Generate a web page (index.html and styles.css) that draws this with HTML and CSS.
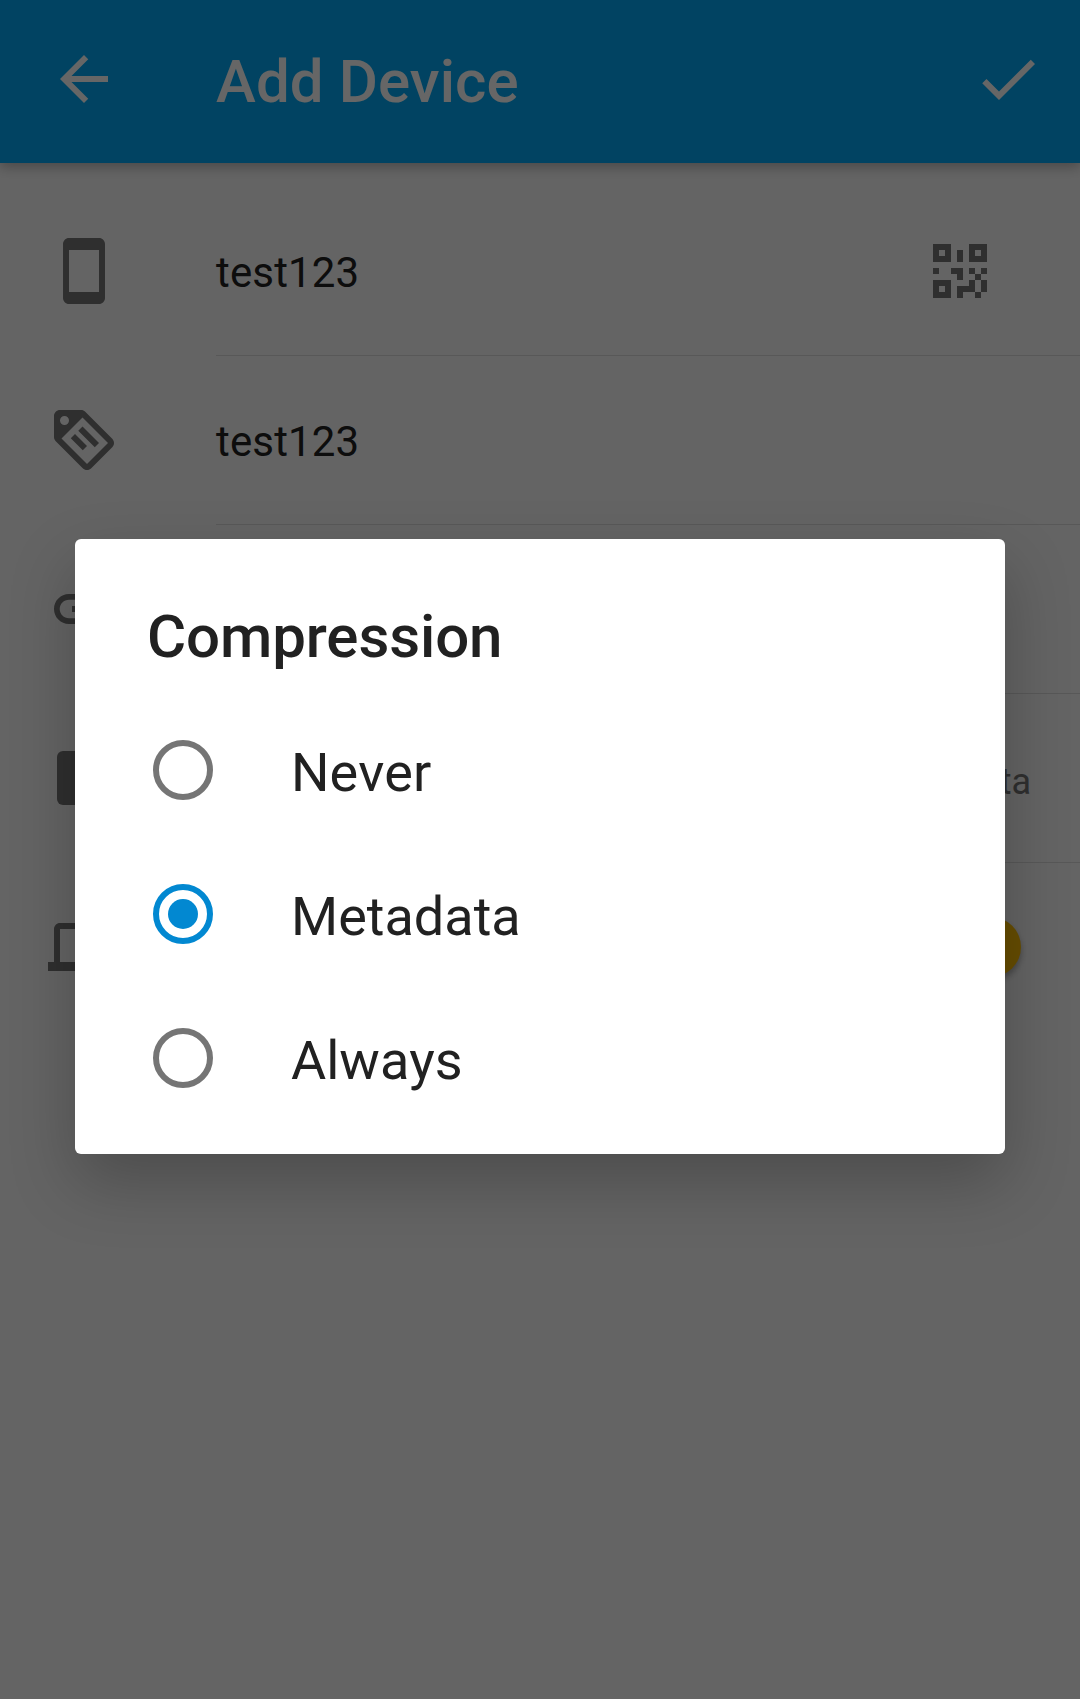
FILE: index.html
```html
<!DOCTYPE html>
<html lang="en">
<head>
<meta charset="utf-8">
<title>Add Device</title>
<link rel="stylesheet" href="styles.css">
</head>
<body>
<div class="screen">
  <header class="toolbar">
    <svg class="icon" viewBox="0 0 24 24"><path d="M20 11H7.83l5.59-5.59L12 4l-8 8 8 8 1.41-1.41L7.83 13H20v-2z"/></svg>
    <h1 class="toolbar-title">Add Device</h1>
    <svg class="icon" viewBox="0 0 24 24"><path d="M9 16.17L4.83 12l-1.42 1.41L9 19 21 7l-1.41-1.41z"/></svg>
  </header>
  <main class="form">
    <div class="row">
      <svg class="icon" viewBox="0 0 24 24"><path d="M17 1.01L7 1c-1.1 0-1.99.9-1.99 2v18c0 1.1.89 2 1.99 2h10c1.1 0 2-.9 2-2V3c0-1.1-.9-1.99-2-1.99zM17 19H7V5h10v14z"/></svg>
      <div class="field"><span class="value">test123</span>
        <svg class="icon qr" viewBox="0 0 24 24" shape-rendering="crispEdges"><path fill-rule="evenodd" d="M3 3h6v6H3zM5 5v2h2V5zM15 3h6v6h-6zM17 5v2h2V5zM3 15h6v6H3zM5 17v2h2v-2zM11 5h2v4h-2zM3 11h2v2H3zM9 11h4v4h-2v-2H9zM15 11h2v2h-2zM19 11h2v2h-2zM17 13h2v2h-2zM15 15h2v4h-4v2h-2v-4h4zM19 15h2v4h-2zM17 19h2v2h-2z"/></svg>
      </div>
    </div>
    <div class="row">
      <svg class="icon" viewBox="0 0 24 24"><path fill-rule="evenodd" d="M5.5 7A1.5 1.5 0 0 0 7 5.5A1.5 1.5 0 0 0 5.5 4A1.5 1.5 0 0 0 4 5.5A1.5 1.5 0 0 0 5.5 7M21.41 11.58C21.77 11.94 22 12.44 22 13C22 13.55 21.78 14.05 21.41 14.41L14.41 21.41C14.05 21.77 13.55 22 13 22C12.45 22 11.95 21.77 11.58 21.41L2.59 12.41C2.22 12.05 2 11.55 2 11V4C2 2.89 2.89 2 4 2H11C11.55 2 12.05 2.22 12.41 2.58L21.41 11.58M13 20L20 13L11.5 4.5L4.5 11.5L13 20M10.09 8.91L11.5 7.5L17 13L15.59 14.41L10.09 8.91M7.59 11.41L9 10L13 14L11.59 15.41L7.59 11.41Z"/></svg>
      <div class="field"><span class="value">test123</span></div>
    </div>
    <div class="row">
      <svg class="icon" viewBox="0 0 24 24"><path d="M3.9 12c0-1.71 1.39-3.1 3.1-3.1h4V7H7c-2.76 0-5 2.24-5 5s2.24 5 5 5h4v-1.9H7c-1.71 0-3.1-1.39-3.1-3.1zM8 13h8v-2H8v2zm9-6h-4v1.9h4c1.71 0 3.1 1.39 3.1 3.1s-1.39 3.1-3.1 3.1h-4V17h4c2.76 0 5-2.24 5-5s-2.24-5-5-5z"/></svg>
      <div class="field"></div>
    </div>
    <div class="row">
      <svg class="icon" viewBox="0 0 24 24"><rect x="3" y="3" width="18" height="18" rx="2"/></svg>
      <div class="field"><span class="hint">Metadata</span></div>
    </div>
    <div class="row">
      <svg class="icon" viewBox="0 0 24 24"><path d="M4 6h18V4H4c-1.1 0-2 .9-2 2v11H0v3h14v-3H4V6zm19 2h-6c-.55 0-1 .45-1 1v10c0 .55.45 1 1 1h6c.55 0 1-.45 1-1V9c0-.55-.45-1-1-1zm-1 9h-4v-7h4v7z"/></svg>
      <div class="field last"><span class="switch"><span class="thumb"></span></span></div>
    </div>
  </main>
  <div class="scrim">
    <section class="dialog" role="dialog">
      <h2 class="dialog-title">Compression</h2>
      <div class="option"><span class="radio"></span><span class="option-label">Never</span></div>
      <div class="option"><span class="radio checked"></span><span class="option-label">Metadata</span></div>
      <div class="option"><span class="radio"></span><span class="option-label">Always</span></div>
    </section>
  </div>
</div>
</body>
</html>
```
FILE: styles.css
```css
* { box-sizing: border-box; }
body { margin: 0; font-family: Roboto, "Liberation Sans", sans-serif; }
h1, h2 { margin: 0; font-weight: 500; }

.screen {
  position: relative;
  height: 1699px;
  overflow: hidden;
  background: #fafafa;
}

.icon { width: 72px; height: 72px; flex: none; fill: currentColor; }

.toolbar {
  display: flex;
  align-items: flex-start;
  height: 163px;
  padding: 43px 36px 0 48px;
  background: #03a9f4;
  color: #fff;
  box-shadow: 0 4px 12px rgba(0, 0, 0, 0.28);
}
.toolbar-title {
  flex: 1;
  margin-left: 96px;
  padding-top: 3px;
  font-size: 60px;
  line-height: 72px;
  letter-spacing: 0.1px;
}

.form { padding-top: 24px; color: #757575; }
.row {
  display: flex;
  align-items: flex-start;
  height: 169px;
  padding-left: 48px;
}
.row > .icon { margin-top: 48px; }
.field {
  flex: 1;
  display: flex;
  align-items: center;
  height: 169px;
  margin-left: 96px;
  border-bottom: 1px solid rgba(0, 0, 0, 0.12);
}
.field.last { border-bottom-color: transparent; }
.value { padding-top: 3px; color: #212121; font-size: 42px; letter-spacing: 0.15px; }
.qr { margin-left: auto; margin-right: 84px; }
.hint { margin-left: auto; padding: 8px 49px 0 0; font-size: 36px; }

.switch {
  display: flex;
  justify-content: flex-end;
  align-items: center;
  width: 102px;
  height: 42px;
  margin-left: auto;
  margin-right: 59px;
}
.thumb {
  width: 60px;
  height: 60px;
  border-radius: 50%;
  background: #ffc107;
  box-shadow: 0 4px 6px rgba(0, 0, 0, 0.3);
}

/* Modal layer over the form */
.scrim {
  position: absolute;
  inset: 0;
  padding: 539px 75px 0;
  background: rgba(0, 0, 0, 0.6);
}
.dialog {
  height: 615px;
  padding: 63px 72px 0;
  border-radius: 6px;
  background: #fff;
  color: #212121;
  box-shadow: 0 28px 66px rgba(0, 0, 0, 0.24);
}
.dialog-title { font-size: 60px; line-height: 70px; margin-bottom: 26px; letter-spacing: -0.1px; }
.option { display: flex; align-items: center; height: 144px; padding-left: 6px; }
.radio {
  display: grid;
  place-items: center;
  width: 60px;
  height: 60px;
  border: 6px solid #757575;
  border-radius: 50%;
}
.radio.checked { border-color: #0288d1; }
.radio.checked::after {
  content: "";
  width: 30px;
  height: 30px;
  border-radius: 50%;
  background: #0288d1;
}
.option-label { margin-left: 78px; padding-top: 5px; font-size: 54px; font-kerning: none; }
```
